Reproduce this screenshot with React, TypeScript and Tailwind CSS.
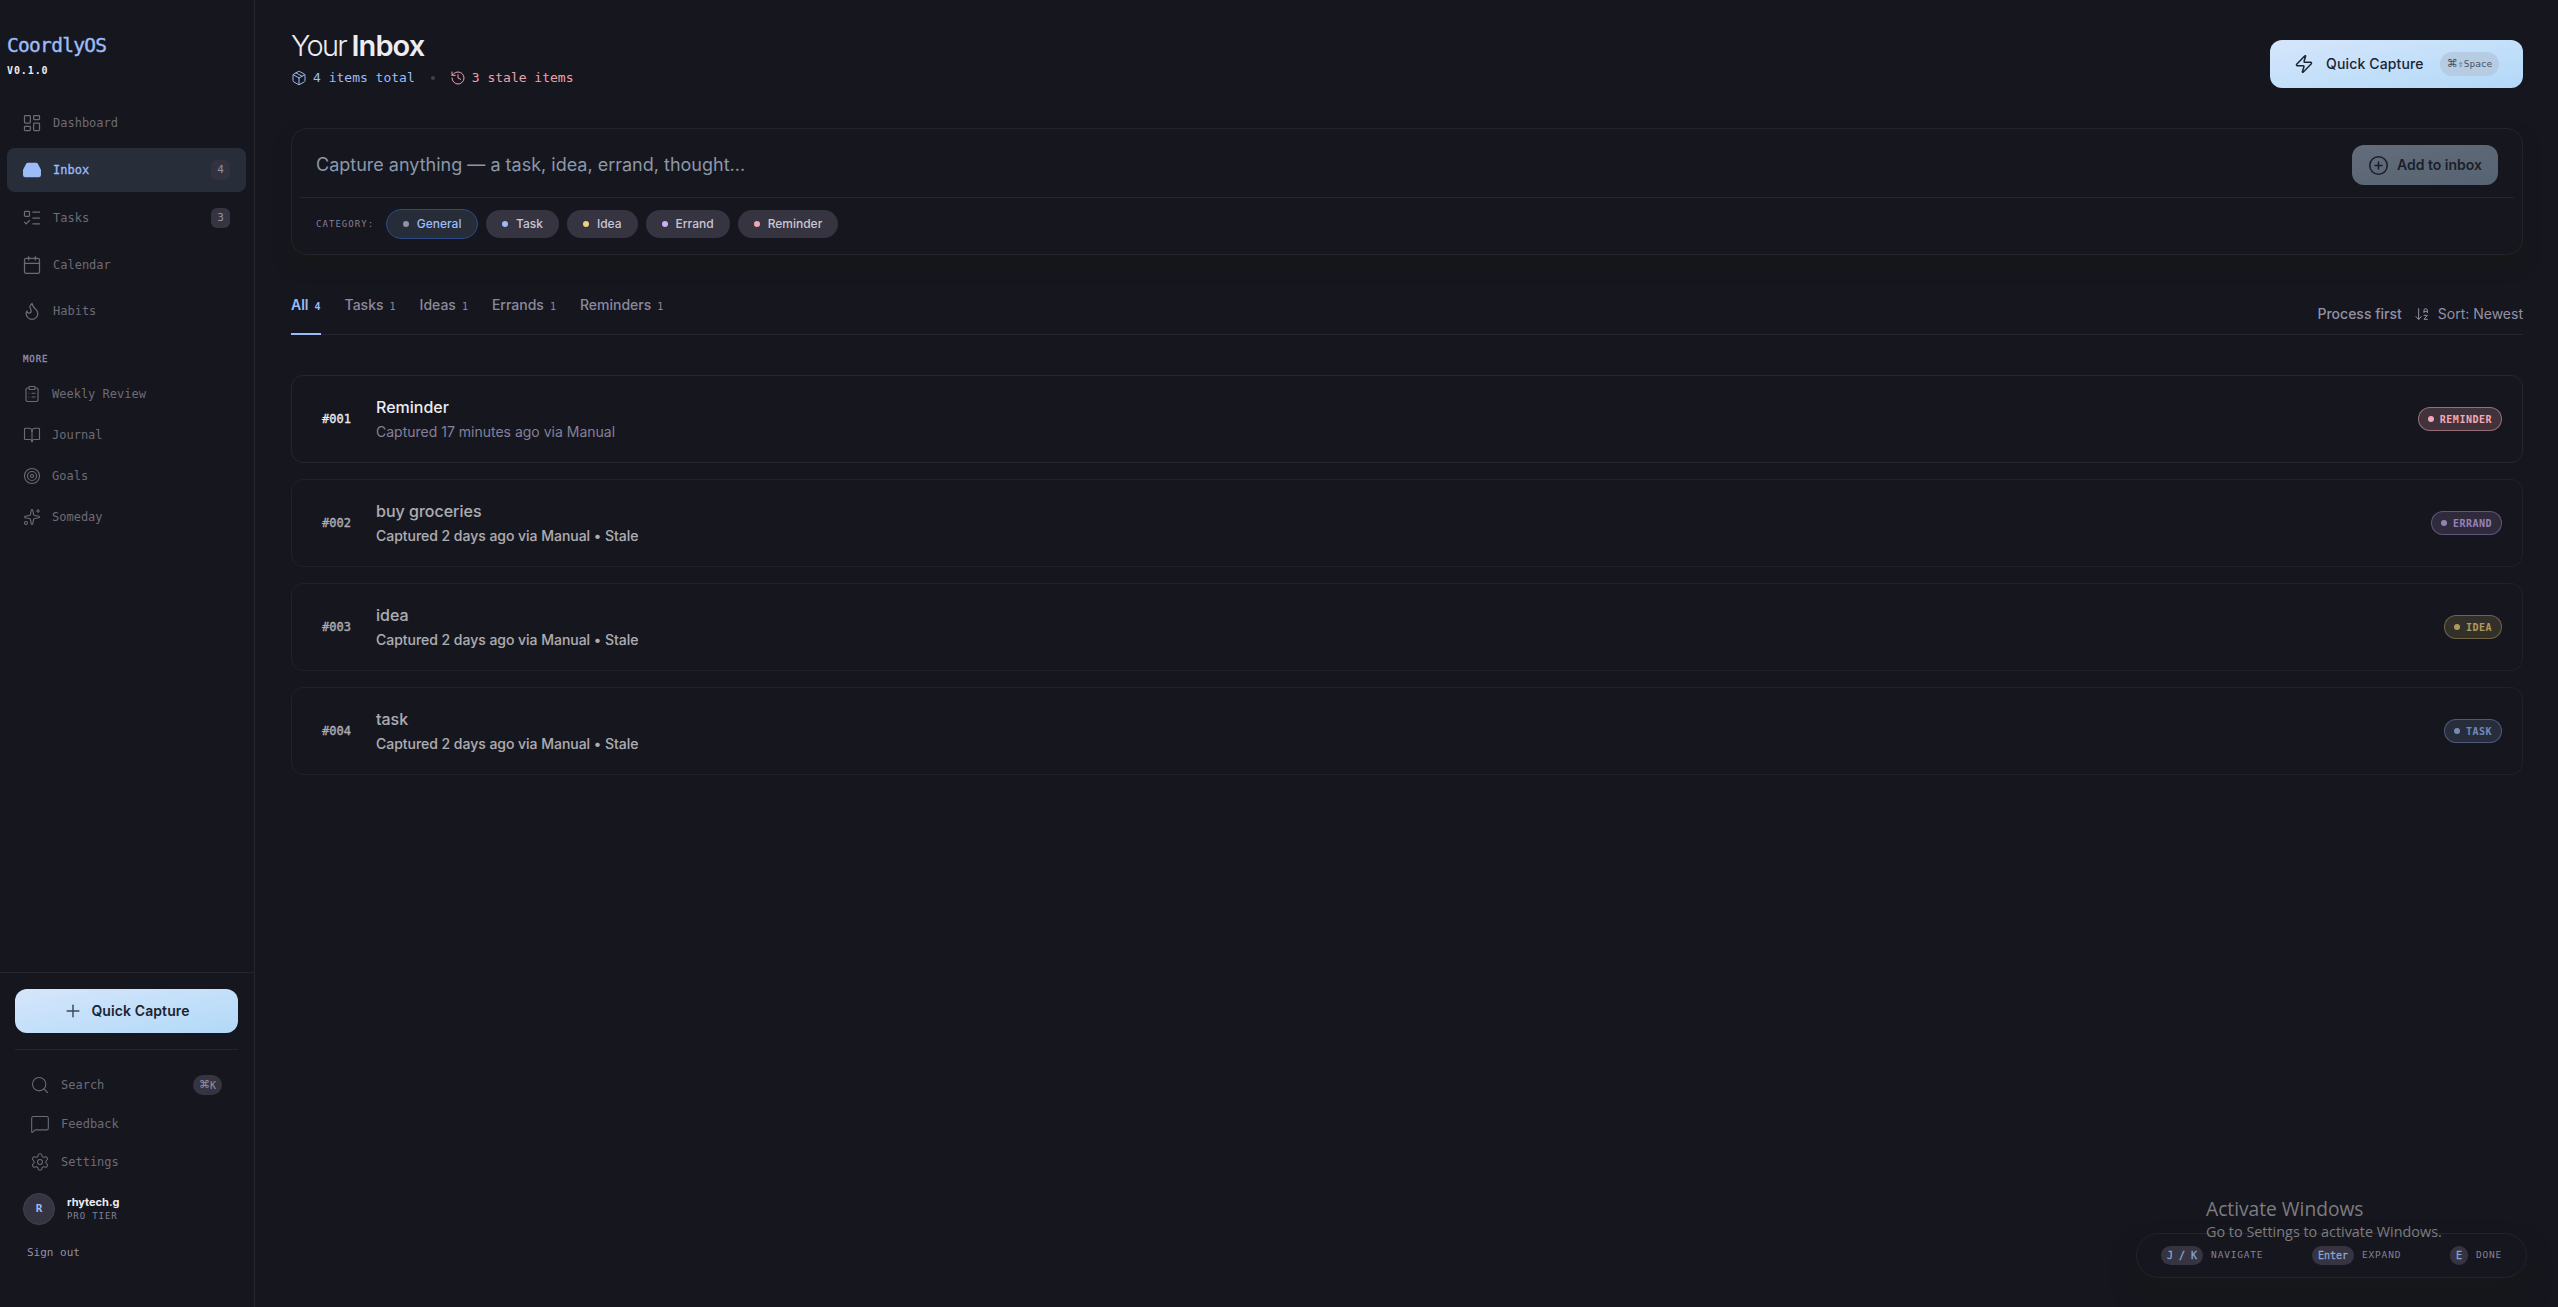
import React from 'react';
import {
  ArrowDownAZ,
  BookOpen,
  Calendar,
  CirclePlus,
  ClipboardList,
  Flame,
  History,
  Inbox,
  LayoutDashboard,
  ListTodo,
  LucideIcon,
  MessageSquare,
  Package,
  Plus,
  Search,
  Settings,
  Sparkles,
  Target,
  Zap,
} from 'lucide-react';

interface NavItem {
  label: string;
  icon: LucideIcon;
  count?: number;
  active?: boolean;
}

interface InboxItem {
  id: string;
  title: string;
  meta: string;
  category: 'Reminder' | 'Errand' | 'Idea' | 'Task';
  stale?: boolean;
}

const mono = "font-['DejaVu_Sans_Mono','Liberation_Mono',monospace]";

const mainNav: NavItem[] = [
  { label: 'Dashboard', icon: LayoutDashboard },
  { label: 'Inbox', icon: Inbox, count: 4, active: true },
  { label: 'Tasks', icon: ListTodo, count: 3 },
  { label: 'Calendar', icon: Calendar },
  { label: 'Habits', icon: Flame },
];

const moreNav: NavItem[] = [
  { label: 'Weekly Review', icon: ClipboardList },
  { label: 'Journal', icon: BookOpen },
  { label: 'Goals', icon: Target },
  { label: 'Someday', icon: Sparkles },
];

const categories = [
  { label: 'General', dot: 'bg-[#9391a5]', active: true },
  { label: 'Task', dot: 'bg-[#9bbcf8]' },
  { label: 'Idea', dot: 'bg-[#ecd27a]' },
  { label: 'Errand', dot: 'bg-[#cbb0f5]' },
  { label: 'Reminder', dot: 'bg-[#f0a6b3]' },
];

const tabs = [
  { label: 'All', count: 4, active: true },
  { label: 'Tasks', count: 1 },
  { label: 'Ideas', count: 1 },
  { label: 'Errands', count: 1 },
  { label: 'Reminders', count: 1 },
];

const items: InboxItem[] = [
  { id: '#001', title: 'Reminder', meta: 'Captured 17 minutes ago via Manual', category: 'Reminder' },
  { id: '#002', title: 'buy groceries', meta: 'Captured 2 days ago via Manual • Stale', category: 'Errand', stale: true },
  { id: '#003', title: 'idea', meta: 'Captured 2 days ago via Manual • Stale', category: 'Idea', stale: true },
  { id: '#004', title: 'task', meta: 'Captured 2 days ago via Manual • Stale', category: 'Task', stale: true },
];

const badgeStyles = {
  Reminder: 'bg-[#f2a9b6]/20 border-[#f2a9b6]/50 text-[#f2a9b6]',
  Errand: 'bg-[#cbb0f5]/20 border-[#cbb0f5]/50 text-[#cbb0f5]',
  Idea: 'bg-[#ecd27a]/20 border-[#ecd27a]/50 text-[#ecd27a]',
  Task: 'bg-[#9bbcf8]/20 border-[#9bbcf8]/50 text-[#9bbcf8]',
};

const Sidebar: React.FC = () => (
  <aside className="w-[255px] shrink-0 h-full border-r border-[#262630] flex flex-col">
    <div className="pl-[7px] pr-2 flex-1">
      <div className="h-[102px] pt-[32px]">
        <div className={`${mono} text-[19.5px] leading-7 tracking-[-0.7px] text-[#9bbcf8] [-webkit-text-stroke:0.4px]`}>CoordlyOS</div>
        <div className={`${mono} mt-[3px] text-[10px] leading-[15px] tracking-[0.9px] text-[#ececf1] font-bold`}>V0.1.0</div>
      </div>

      <nav className="flex flex-col gap-1">
        {mainNav.map(({ label, icon: Icon, count, active }) => (
          <div
            key={label}
            className={`flex items-center gap-[11px] pl-[15px] pr-4 rounded-lg ${count ? 'h-11' : 'h-[42px]'} ${
              active ? 'bg-[#282d3a] text-[#9bbcf8]' : 'text-[#6c6b76]'
            }`}
          >
            <Icon className="w-5 h-5" strokeWidth={1.5} fill={active ? 'currentColor' : 'none'} />
            <span className={`${mono} text-xs ${active ? '[-webkit-text-stroke:0.3px]' : ''}`}>{label}</span>
            {count && (
              <span
                className={`${mono} ml-auto w-[19px] h-5 rounded-md flex items-center justify-center text-[11px] text-[#9391a5] ${
                  active ? 'bg-[#33333f]' : 'bg-[#353440]'
                }`}
              >
                {count}
              </span>
            )}
          </div>
        ))}
      </nav>

      <div className={`${mono} mt-[19px] ml-4 text-[9px] leading-4 tracking-[0.9px] text-[#8f90b0] [-webkit-text-stroke:0.3px]`}>MORE</div>
      <div className="mt-[6px] flex flex-col">
        {moreNav.map(({ label, icon: Icon }) => (
          <div key={label} className="flex items-center gap-[11px] pl-4 h-[41px] text-[#6c6b76]">
            <Icon className="w-[18px] h-[18px]" strokeWidth={1.5} />
            <span className={`${mono} text-xs`}>{label}</span>
          </div>
        ))}
      </div>
    </div>

    <div className="h-[335px] border-t border-[#262630] pl-[15px] pr-4 pt-4">
      <button className="w-full h-11 rounded-xl bg-gradient-to-br from-[#d6e6fb] to-[#b1d9f8] flex items-center justify-center gap-2 text-[#1b2433]">
        <Plus className="w-5 h-5 text-[#3a4658]" strokeWidth={1.7} />
        <span className="text-sm font-semibold tracking-[0.1px]">Quick Capture</span>
      </button>
      <div className="mt-4 border-t border-[#262630] pt-[15px] text-[#6c6b76]">
        {[
          { label: 'Search', icon: Search, hint: '⌘K' },
          { label: 'Feedback', icon: MessageSquare },
          { label: 'Settings', icon: Settings },
        ].map(({ label, icon: Icon, hint }) => (
          <div key={label} className={`flex items-center gap-[11px] pl-[15px] pr-4 ${hint ? 'h-10' : 'h-[38px]'}`}>
            <Icon className="w-5 h-5" strokeWidth={1.3} />
            <span className={`${mono} text-xs`}>{label}</span>
            {hint && (
              <span className={`${mono} ml-auto w-[29px] h-5 rounded-full bg-[#353440] text-[#9391a5] text-[10px] flex items-center justify-center`}>
                <span className="font-['DejaVu_Sans',sans-serif] text-[11px]">⌘</span>K
              </span>
            )}
          </div>
        ))}
      </div>
      <div className="mt-3 ml-2 flex items-center gap-3">
        <div className={`${mono} w-8 h-8 rounded-full bg-[#353440] border border-[#41404d] flex items-center justify-center text-[11px] font-bold text-[#9bbcf8]`}>
          R
        </div>
        <div className="flex flex-col">
          <span className="text-[11px] leading-[15px] font-bold text-[#ececf1]">rhytech.g</span>
          <span className={`${mono} text-[9px] leading-[13px] tracking-[0.9px] text-[#83819a]`}>PRO TIER</span>
        </div>
      </div>
      <div className={`${mono} mt-5 ml-3 text-[11px] leading-4 text-[#9391a5]`}>Sign out</div>
    </div>
  </aside>
);

const Header: React.FC = () => (
  <header className="flex items-start justify-between h-[128px] pt-[26px]">
    <div>
      <h1 className="text-[29px] leading-10 tracking-[-1.7px] text-[#ececf1] font-[350]">
        Your <span className="-ml-[1px] font-semibold tracking-[-0.9px]">Inbox</span>
      </h1>
      <div className={`${mono} flex items-center mt-0.5 h-5 text-[13px] text-[#9bbcf8]`}>
        <Package className="w-4 h-4 mr-1.5" strokeWidth={1.5} />
        <span>4 items total</span>
        <span className="w-1 h-1 rounded-full bg-[#41404d] mx-4" />
        <span className="-ml-px flex items-center text-[#eba2ae]">
          <History className="w-4 h-4 mr-1.5" strokeWidth={1.5} />
          3 stale items
        </span>
      </div>
    </div>
    <button className="mt-[14px] w-[253px] h-12 pl-6 pr-6 rounded-xl bg-gradient-to-br from-[#d6e6fb] to-[#b1d9f8] flex items-center text-[#1b2433]">
      <Zap className="w-5 h-5" strokeWidth={1.8} />
      <span className="ml-3 text-sm font-medium tracking-[0.15px]">Quick Capture</span>
      <span className={`${mono} ml-auto w-[59px] h-6 rounded-full bg-[#b6cce2] text-[#465468] text-[9.5px] flex items-center justify-center`}>
        <span className="font-['DejaVu_Sans',sans-serif] text-[11px]">⌘</span>
        <span className="w-[6px] overflow-visible">⇧</span>Space
      </span>
    </button>
  </header>
);

const CaptureBox: React.FC = () => (
  <section className="h-[127px] px-2 pt-2 rounded-2xl border border-[#23232d] shadow-[0_10px_16px_rgba(24,26,20,0.5)]">
    <div className="h-[61px] pl-4 pr-4 pb-1 flex items-center justify-between border-b border-[#262630]">
      <span className="text-lg text-[#8b98a9]">Capture anything — a task, idea, errand, thought...</span>
      <button className="w-[146px] h-10 rounded-xl bg-gradient-to-br from-[#636c7a] to-[#566372] flex items-center justify-center gap-2 text-[#1a1f2b]">
        <CirclePlus className="w-[21px] h-[21px]" strokeWidth={1.8} />
        <span className="text-sm font-semibold">Add to inbox</span>
      </button>
    </div>
    <div className="pl-4 h-[52px] flex items-center gap-2">
      <span className={`${mono} pt-px text-[9px] tracking-[1.05px] text-[#83819a] mr-[4px]`}>CATEGORY:</span>
      {categories.map(({ label, dot, active }) => (
        <span
          key={label}
          className={`flex items-center gap-2 rounded-full text-xs font-medium ${
            active ? 'h-[30px] px-[15.5px] bg-[#272c39] border border-[#2e4a85] text-[#9bbcf8]' : 'h-7 px-4 bg-[#353440] text-[#c9c7d6]'
          }`}
        >
          <span className={`w-1.5 h-1.5 rounded-full ${dot}`} />
          {label}
        </span>
      ))}
    </div>
  </section>
);

const TabBar: React.FC = () => (
  <div className="mt-[34px] h-[46px] flex justify-between border-b border-[#262630]">
    <div className="flex gap-6">
      {tabs.map(({ label, count, active }) => (
        <div
          key={label}
          className={`h-[46px] flex items-start pt-[6px] gap-1.5 text-sm ${
            active ? 'font-semibold text-[#9bbcf8] border-b-2 border-[#9bbcf8]' : 'font-medium text-[#8b899c]'
          }`}
        >
          {label}
          <span className={`${mono} text-[10px] leading-[23px]`}>{count}</span>
        </div>
      ))}
    </div>
    <div className="flex items-center pt-[5px] text-sm text-[#9391a5]">
      <span className="font-medium">Process first</span>
      <ArrowDownAZ className="w-4 h-4 ml-3 mr-2" strokeWidth={1.5} />
      <span>Sort: Newest</span>
    </div>
  </div>
);

const ItemCard: React.FC<{ item: InboxItem }> = ({ item }) => (
  <article
    className={`h-[88px] pl-[30px] pr-5 rounded-xl border border-[#262630] flex items-center ${item.stale ? 'opacity-70' : ''}`}
  >
    <span className={`${mono} text-xs [-webkit-text-stroke:0.3px] text-[#ececf1] w-[54px]`}>{item.id}</span>
    <div className="pt-px">
      <div className="text-base leading-6 font-medium text-[#ececf1]">{item.title}</div>
      <div className={`text-sm leading-[26px] ${item.stale ? 'font-medium tracking-[-0.03px] text-[#ececf1]' : 'text-[#83819a]'}`}>
        {item.meta}
      </div>
    </div>
    <span
      className={`${mono} ml-auto h-6 px-[9px] rounded-full border flex items-center gap-1.5 text-[10px] tracking-[0.5px] font-bold uppercase ${
        badgeStyles[item.category]
      }`}
    >
      <span className="w-1.5 h-1.5 rounded-full bg-current" />
      {item.category}
    </span>
  </article>
);

const Shortcut: React.FC<{ keys: string; label: string }> = ({ keys, label }) => (
  <div className="flex items-center gap-2">
    <span className={`${mono} h-[19px] px-1.5 rounded-full bg-[#353440] text-[10px] [-webkit-text-stroke:0.3px] text-[#88a5da] flex items-center whitespace-pre`}>
      {keys}
    </span>
    <span className={`${mono} text-[9.5px] tracking-[0.8px] text-[#83819a]`}>{label}</span>
  </div>
);

const App: React.FC = () => {
  return (
    <div className="relative w-screen h-screen overflow-hidden bg-[#16161e] font-['Inter','Liberation_Sans',sans-serif] flex">
      <Sidebar />
      <main className="flex-1 pl-9 pr-[35px]">
        <Header />
        <CaptureBox />
        <TabBar />
        <div className="mt-10 flex flex-col gap-4">
          {items.map((item) => (
            <ItemCard key={item.id} item={item} />
          ))}
        </div>
      </main>

      {/* Floating shortcut legend */}
      <div className="absolute left-[2136px] top-[1233px] w-[391px] h-[45px] px-6 rounded-full border border-[#23232d] bg-[#16161e] shadow-[0_16px_24px_rgba(24,26,20,0.5)] flex items-center justify-between">
        <Shortcut keys="J / K" label="NAVIGATE" />
        <Shortcut keys="Enter" label="EXPAND" />
        <Shortcut keys="E" label="DONE" />
      </div>

      {/* OS activation watermark, sits over everything */}
      <div className="absolute left-[2206px] top-[1195px] font-['Open_Sans','Noto_Sans',sans-serif] text-[#7d7d80] whitespace-nowrap">
        <div className="text-[19.2px] leading-[27px]">Activate Windows</div>
        <div className="text-[14.4px] leading-5">Go to Settings to activate Windows.</div>
      </div>
    </div>
  );
};

export default App;
